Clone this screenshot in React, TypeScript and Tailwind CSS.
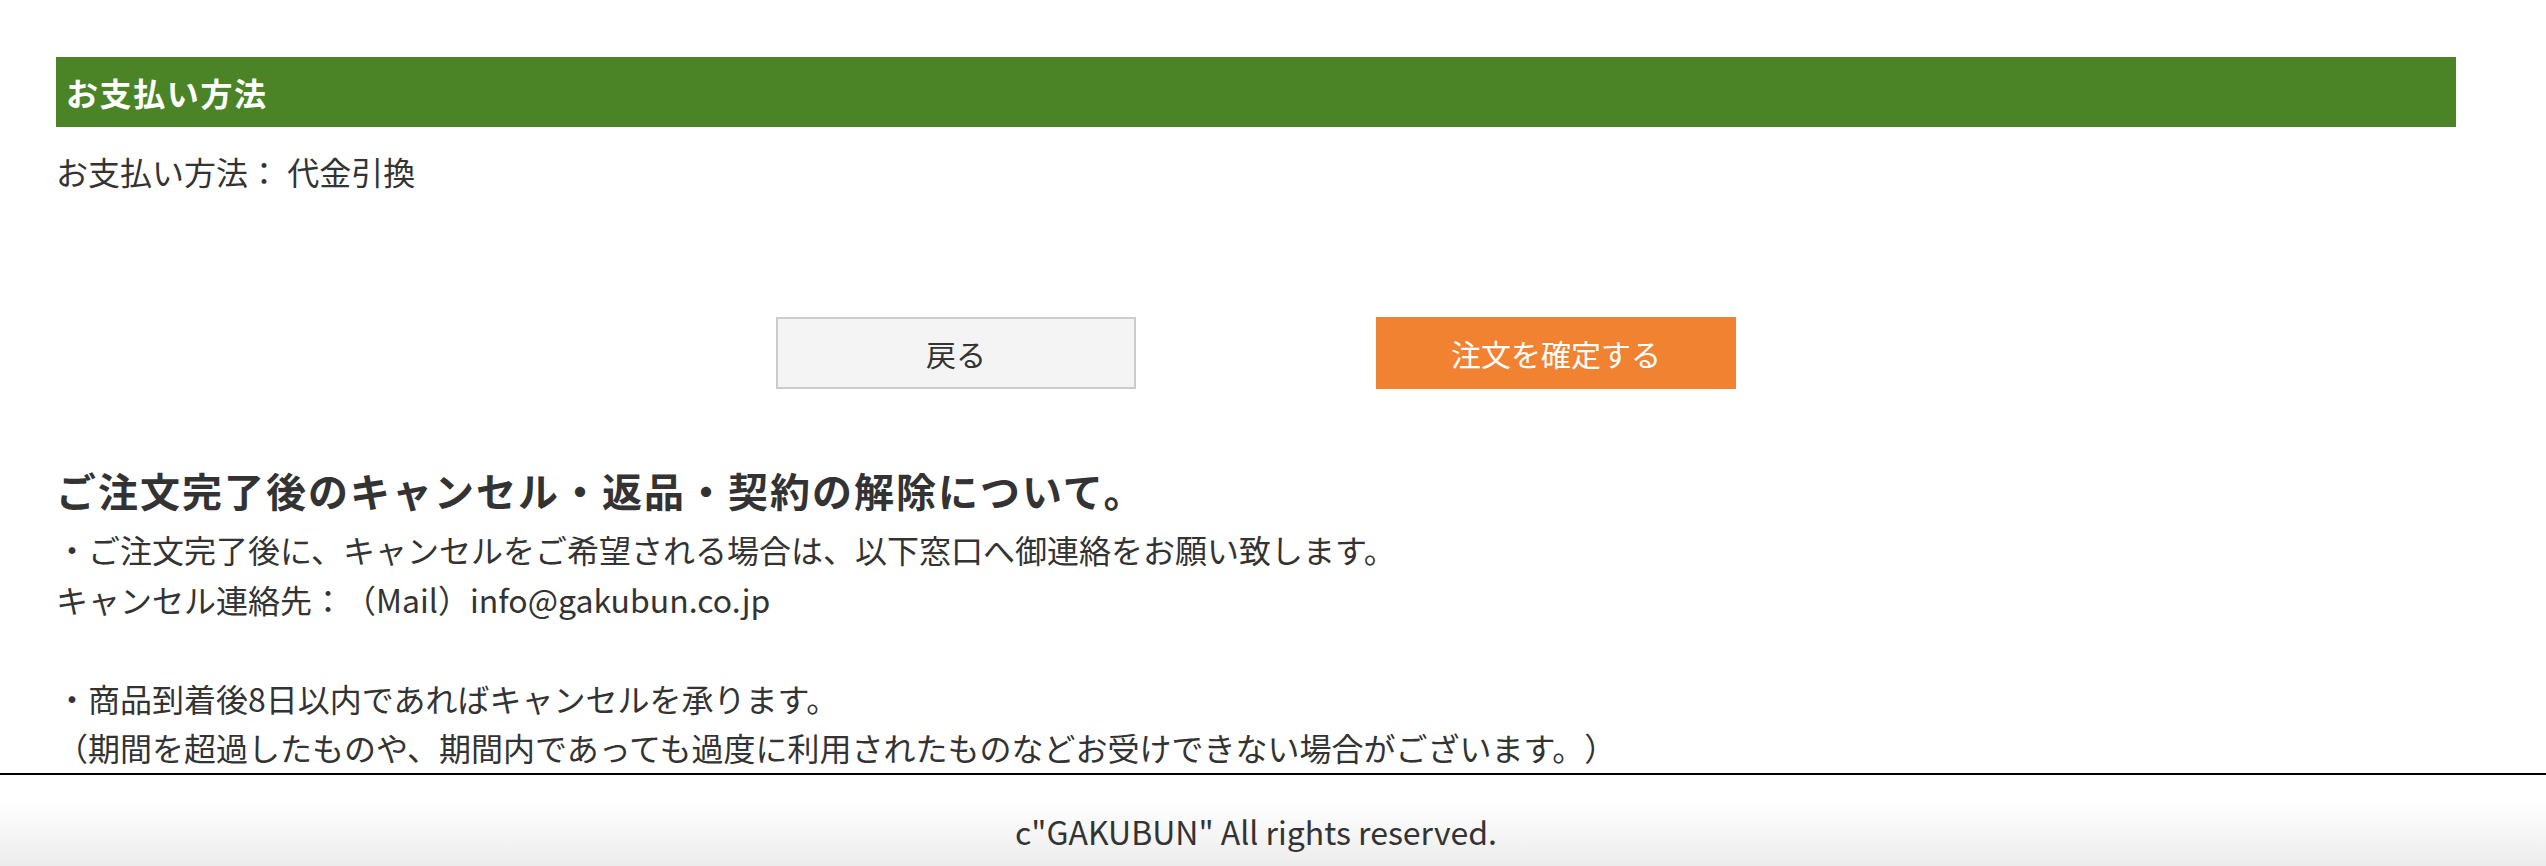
import React from 'react';

const font = "font-['Noto_Sans_CJK_JP','Noto_Sans',sans-serif]";

export default function App() {
  return (
    <div className={`min-h-[866px] bg-white text-[#333] ${font} [text-spacing-trim:space-all] flex flex-col`}>
      <main className="w-[2400px] ml-[56px] pt-[57px]">
        {/* Payment section */}
        <h2 className="h-[70px] bg-[#4a8427] text-white font-bold text-[32px] tracking-[0.05em] flex items-center pl-[10px]">
          お支払い方法
        </h2>
        <p className="mt-[19px] text-[32px] leading-[50px]">お支払い方法： 代金引換</p>

        {/* Buttons */}
        <div className="mt-[121px] flex justify-center gap-[240px]">
          <button className="w-[360px] h-[72px] bg-[#f4f4f4] border-2 border-[#cccccc] text-[30px] text-[#333]">
            戻る
          </button>
          <button className="w-[360px] h-[72px] bg-[#f08232] text-[30px] text-white">
            注文を確定する
          </button>
        </div>

        {/* Cancel policy */}
        <h3 className="mt-[66px] text-[40px] font-bold tracking-[0.05em] leading-[70px]">
          ご注文完了後のキャンセル・返品・契約の解除について。
        </h3>
        <div className="text-[32px] leading-[49.6px]">
          <p>・ご注文完了後に、キャンセルをご希望される場合は、以下窓口へ御連絡をお願い致します。</p>
          <p>キャンセル連絡先：（Mail）info@gakubun.co.jp</p>
          <p>&nbsp;</p>
          <p>・商品到着後8日以内であればキャンセルを承ります。</p>
          <p>（期間を超過したものや、期間内であっても過度に利用されたものなどお受けできない場合がございます。）</p>
        </div>
      </main>

      <footer className="mt-auto h-[93px] border-t-2 border-black bg-gradient-to-b from-white from-30% to-[#ececec]">
        <div className="w-[2400px] ml-[56px] pt-[32px] text-center text-[32px] leading-[48px]">
          c"GAKUBUN" All rights reserved.
        </div>
      </footer>
    </div>
  );
}
